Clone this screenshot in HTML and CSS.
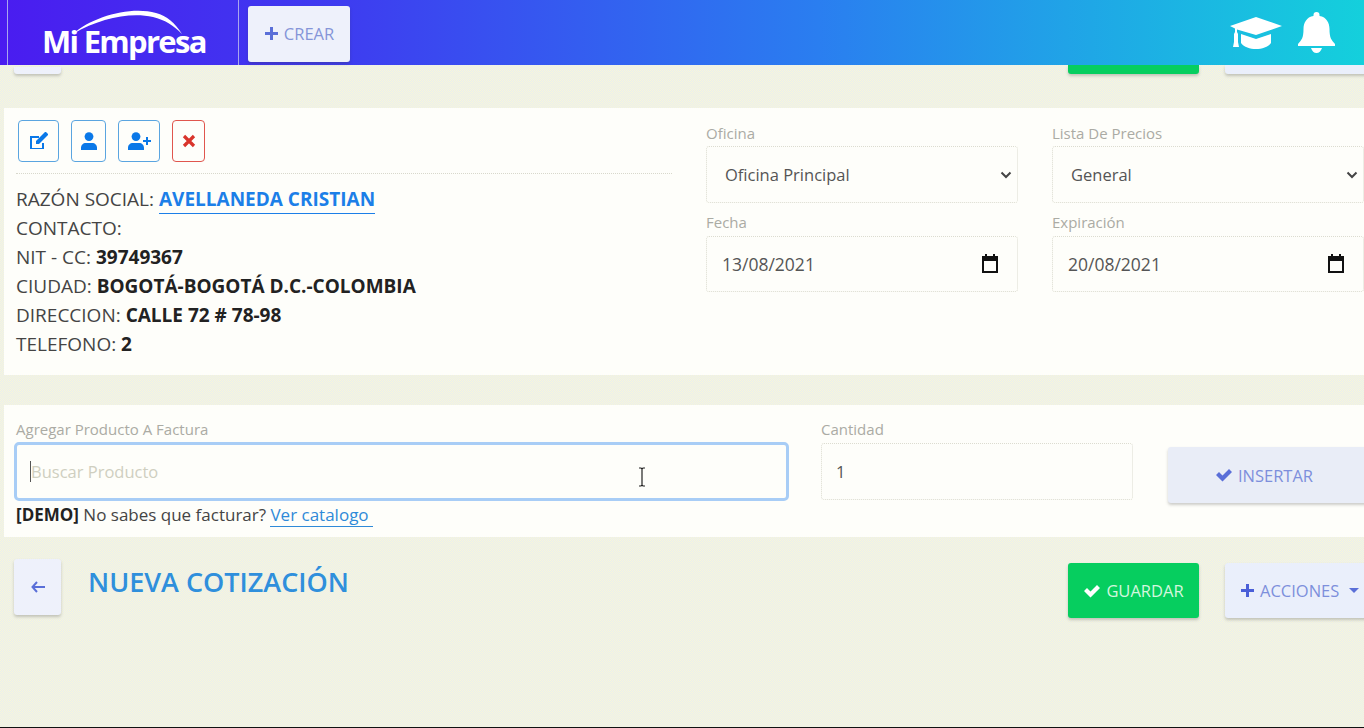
FILE: index.html
```html
<!DOCTYPE html>
<html lang="es">
<head>
<meta charset="utf-8">
<title>Nueva cotización</title>
<link rel="stylesheet" href="styles.css">
</head>
<body>
<header class="topbar">
  <div class="brand">
    <svg class="swoosh" width="112" height="26" viewBox="0 0 112 26"><path d="M1 25C20 8 58-3 84 4c11 3 19 10 26 21-9-9-17-14-29-17C58 3 28 9 1 25z" fill="#fff"/></svg>
    <span class="brand-name">Mi Empresa</span>
  </div>
  <button class="btn btn-crear"><svg class="ico" width="15" height="15" viewBox="0 0 15 15"><path d="M6 1h3v5h5v3H9v5H6V9H1V6h5z" fill="#5a6fd8"/></svg>CREAR</button>
  <div class="top-icons">
    <svg width="52" height="32" viewBox="0 0 52 32" fill="#fff"><path d="M26 0 0 9l5 2.500v3.500l-1 2v8l-1 5h6l-1-5v-8l-1-2v-2.500L26 18l26-9z"/><path d="M11 17v9c3 4 9 6 15 6s12-2 15-6v-9l-15 5z"/></svg>
    <svg width="37" height="41" viewBox="0 0 37 41" fill="#fff"><path d="M18.500 0c2 0 3 1 3 3v1c7 1 10 7 10 13 0 9 2 11 5.500 15v2H0v-2c3.500-4 5.500-6 5.500-15 0-6 3-12 10-13V3c0-2 1-3 3-3zM13 36h11c-1 3-3 5-5.500 5S14 39 13 36z"/></svg>
  </div>
</header>
<main class="page">
  <div class="actions actions-ghost">
    <button class="btn btn-back"></button>
    <div class="actions-right">
      <button class="btn btn-green"></button>
      <button class="btn btn-light btn-acciones"></button>
    </div>
  </div>

  <section class="card card-client">
    <div class="client">
      <div class="tools">
        <button class="tool tool-edit"><svg width="20" height="18" viewBox="0 0 20 18"><path d="M2 4h8v2H3v10h10v-5h2v6H1V4z" fill="#0a78e8"/><path d="M7 9 15 1l3 3-8 8H7zM16 0h1l2 2v1l-1 1-3-3z" fill="#0a78e8"/></svg></button>
        <button class="tool tool-user"><svg width="16" height="18" viewBox="0 0 16 18"><circle cx="8" cy="4.600" r="4.400" fill="#0a78e8"/><path d="M0 18v-2c0-3 2-5 5-5h6c3 0 5 2 5 5v2z" fill="#0a78e8"/></svg></button>
        <button class="tool tool-add"><svg width="23" height="18" viewBox="0 0 23 18"><circle cx="8" cy="4.600" r="4.400" fill="#0a78e8"/><path d="M0 18v-2c0-3 2-5 5-5h6c3 0 5 2 5 5v2zM18 5h2v3h3v2h-3v3h-2v-3h-3V8h3z" fill="#0a78e8"/></svg></button>
        <button class="tool tool-del"><svg width="14" height="14" viewBox="0 0 14 14"><path d="M2 2l10 10M12 2 2 12" stroke="#d9342b" stroke-width="3.200"/></svg></button>
      </div>
      <p>RAZÓN SOCIAL: <a class="client-link" href="#">AVELLANEDA CRISTIAN</a></p>
      <p>CONTACTO:</p>
      <p>NIT - CC: <b>39749367</b></p>
      <p>CIUDAD: <b>BOGOTÁ-BOGOTÁ D.C.-COLOMBIA</b></p>
      <p>DIRECCION: <b>CALLE 72 # 78-98</b></p>
      <p>TELEFONO: <b>2</b></p>
    </div>
    <div class="meta">
      <div class="form-group">
        <label>Oficina</label>
        <div class="control control-select"><span>Oficina Principal</span><svg width="12" height="8" viewBox="0 0 12 8"><path d="M1.500 1.500 6 6l4.500-4.500" fill="none" stroke="#444" stroke-width="2"/></svg></div>
      </div>
      <div class="form-group">
        <label>Lista De Precios</label>
        <div class="control control-select"><span>General</span><svg width="12" height="8" viewBox="0 0 12 8"><path d="M1.500 1.500 6 6l4.500-4.500" fill="none" stroke="#444" stroke-width="2"/></svg></div>
      </div>
      <div class="form-group">
        <label>Fecha</label>
        <div class="control control-date"><span>13/08/2021</span><svg width="18" height="20" viewBox="0 0 18 20"><path d="M4 0h2v2h6V0h2v2h3v17H1V2h3zM3 7v10h12V7z" fill="#111"/></svg></div>
      </div>
      <div class="form-group">
        <label>Expiración</label>
        <div class="control control-date"><span>20/08/2021</span><svg width="18" height="20" viewBox="0 0 18 20"><path d="M4 0h2v2h6V0h2v2h3v17H1V2h3zM3 7v10h12V7z" fill="#111"/></svg></div>
      </div>
    </div>
  </section>

  <section class="card card-add">
    <div class="add-search">
      <label>Agregar Producto A Factura</label>
      <div class="control control-focus"><i class="caret"></i><span class="placeholder">Buscar Producto</span></div>
      <p class="demo"><b>[DEMO]</b> No sabes que facturar? <a href="#">Ver catalogo</a></p>
    </div>
    <div class="add-qty">
      <label>Cantidad</label>
      <div class="control control-qty"><span>1</span></div>
    </div>
    <button class="btn btn-light btn-insert"><svg class="ico" width="18" height="14" viewBox="0 0 18 14"><path d="M1 7l3-3 3.500 3.500L14 1l3 3-9.500 9.500z" fill="#5a6fd8"/></svg>INSERTAR</button>
  </section>

  <div class="actions">
    <button class="btn btn-back"><svg width="14" height="12" viewBox="0 0 14 12"><path d="M6 1 1.500 6 6 11M2 6h12" fill="none" stroke="#5a6fd8" stroke-width="2"/></svg></button>
    <h1>NUEVA COTIZACIÓN</h1>
    <div class="actions-right">
      <button class="btn btn-green"><svg class="ico" width="18" height="14" viewBox="0 0 18 14"><path d="M1 7l3-3 3.500 3.500L14 1l3 3-9.500 9.500z" fill="#fff"/></svg>GUARDAR</button>
      <button class="btn btn-light btn-acciones"><svg class="ico" width="15" height="15" viewBox="0 0 15 15"><path d="M6 1h3v5h5v3H9v5H6V9H1V6h5z" fill="#4a5fd8"/></svg>ACCIONES<svg class="drop" width="10" height="5" viewBox="0 0 10 5"><path d="M0 0h10L5 5z" fill="#5a6fd8"/></svg></button>
    </div>
  </div>
</main>
<svg class="ibeam" width="10" height="20" viewBox="0 0 10 20"><path d="M2 1h2l1 1 1-1h2M5 2v16M2 19h2l1-1 1 1h2" fill="none" stroke="#222" stroke-width="1.200"/></svg>
</body>
</html>
```
FILE: styles.css
```css
* { box-sizing: border-box; }
html, body { height: 100%; }
body {
  margin: 0;
  overflow: hidden;
  position: relative;
  background-color: #f0f1e0;
  background-image: conic-gradient(#e8edf0 25%, #f9f7d8 0 50%, #e8edf0 0 75%, #f9f7d8 0);
  background-size: 2px 2px;
  border-bottom: 1px solid #111;
  font-family: "Open Sans", "Noto Sans", sans-serif;
  color: #444;
}
button { font-family: inherit; border: 0; padding: 0; }
p { margin: 0; }
.topbar {
  position: relative;
  z-index: 2;
  height: 65px;
  display: flex;
  align-items: center;
  background: linear-gradient(90deg, #4a1cf0 0%, #3e3cf0 25%, #2a7ef0 60%, #14d0dc 100%);
}
.brand {
  position: relative;
  margin-left: 7px;
  width: 232px;
  height: 65px;
  border-left: 1px solid #a9a6ee;
  border-right: 1px solid #a9a6ee;
  display: flex;
  align-items: flex-end;
  padding: 0 0 3px 34px;
}
.brand-name { color: #fff; font-size: 31px; font-weight: 700; letter-spacing: -1.700px; line-height: 42px; }
.swoosh { position: absolute; left: 64px; top: 9px; }
.btn {
  display: inline-flex;
  align-items: center;
  justify-content: center;
  font-size: 16.500px;
  border-radius: 3px;
  box-shadow: 0 2px 3px rgba(60, 60, 60, .25);
}
.ico { margin-right: 5px; }
.btn-crear { margin: 2px 0 0 9px; width: 102px; height: 56px; background: #eef1fb; color: #8595d8; }
.top-icons { margin-left: auto; margin-right: 29px; display: flex; align-items: center; gap: 16px; }
.page { display: flex; flex-direction: column; }
.actions { display: flex; align-items: flex-start; padding-left: 14px; height: 55px; margin-top: 26px; }
.actions-ghost { height: 9px; margin-top: 0; align-items: flex-end; }
.actions-ghost .btn { flex-shrink: 0; }
.actions-ghost .btn-back { height: 7px; margin: 0; border-radius: 0 0 3px 3px; }
.actions-ghost .btn-green, .actions-ghost .btn-acciones { height: 9px; border-radius: 0 0 3px 3px; }
.btn-back { width: 47px; height: 56px; margin-top: -4px; background: #eef1fb; }
h1 { margin: 1px 0 0 27px; font-size: 27px; line-height: 36px; font-weight: 600; color: #2f8fdc; }
.actions-right { margin-left: auto; display: flex; gap: 26px; margin-right: -25px; }
.btn-green { width: 131px; height: 55px; background: #06ce5f; color: #d3f7de; }
.btn-light { background: #eaeffb; color: #7d8fdc; }
.btn-acciones { width: 164px; height: 55px; justify-content: flex-start; padding-left: 15px; }
.drop { margin-left: 10px; }
.card { background: #fefefa; margin-left: 4px; }
.card-client { margin-top: 34px; height: 267px; display: flex; }
.client { width: 656px; margin-left: 12px; padding-top: 12px; font-size: 19px; line-height: 29px; flex-shrink: 0; }
.client b { color: #222; }
.tools { display: flex; gap: 12px; height: 54px; padding-left: 2px; border-bottom: 1px dotted #d8d8cc; margin-bottom: 11px; }
.tool { height: 42px; background: transparent; border-radius: 4px; border: 1px solid #5aa5e0; display: flex; align-items: center; justify-content: center; }
.tool-edit { width: 41px; }
.tool-user { width: 35px; }
.tool-add { width: 42px; }
.tool-del { width: 33px; border-color: #e0564e; }
.client-link { color: #1c7fe8; font-weight: 700; text-decoration: none; border-bottom: 1px solid #1c7fe8; padding-bottom: 1px; }
.meta { margin-left: 34px; width: 680px; flex-shrink: 0; display: grid; grid-template-columns: 312px 312px; column-gap: 34px; grid-auto-rows: 89px; padding-top: 16px; }
label { display: block; font-size: 15px; line-height: 18px; color: #ababa4; }
.control { display: flex; align-items: center; justify-content: space-between; border: 1px dotted #dcdcd0; border-radius: 3px; color: #555; background: transparent; }
.form-group .control { margin-top: 4px; }
.form-group .control-date { margin-top: 5px; }
.control-select { height: 57px; padding: 0 5px 0 18px; font-size: 16.500px; }
.control-date { height: 56px; padding: 0 18px 0 15px; font-size: 17.500px; }
.card-add { margin-top: 30px; height: 132px; display: flex; padding: 15px 0 0 12px; }
.add-search { width: 772px; flex-shrink: 0; }
.control-focus { height: 59px; margin: 4px -1px 0 -2px; justify-content: flex-start; padding-left: 13px; border: 3px solid #a8cdf6; border-radius: 5px; font-size: 16.500px; }
.caret { width: 1px; height: 21px; background: #555; }
.placeholder { color: #cfcfc0; }
.demo { font-size: 17px; line-height: 21px; margin-top: 3px; }
.demo b { color: #222; }
.demo a { color: #2f8ad8; text-decoration: none; border-bottom: 1px solid #2f8ad8; padding-right: 4px; }
.add-qty { width: 312px; margin-left: 33px; flex-shrink: 0; }
.control-qty { height: 57px; margin-top: 5px; padding-left: 14px; justify-content: flex-start; font-size: 16.500px; }
.btn-insert { flex-shrink: 0; width: 220px; height: 56px; margin: 27px 0 0 35px; padding-right: 28px; background: #e9edf7; }
.ibeam { position: absolute; left: 637px; top: 467px; }
```
